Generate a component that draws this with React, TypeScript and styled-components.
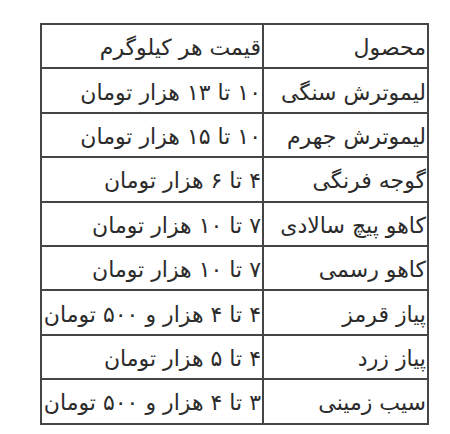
import React from 'react';
import styled, { createGlobalStyle } from 'styled-components';

const rows: [string, string][] = [
  ['محصول', 'قیمت هر کیلوگرم'],
  ['لیموترش سنگی', '۱۰ تا ۱۳ هزار تومان'],
  ['لیموترش جهرم', '۱۰ تا ۱۵ هزار تومان'],
  ['گوجه فرنگی', '۴ تا ۶ هزار تومان'],
  ['کاهو پیچ سالادی', '۷ تا ۱۰ هزار تومان'],
  ['کاهو رسمی', '۷ تا ۱۰ هزار تومان'],
  ['پیاز قرمز', '۴ تا ۴ هزار و ۵۰۰ تومان'],
  ['پیاز زرد', '۴ تا ۵ هزار تومان'],
  ['سیب زمینی', '۳ تا ۴ هزار و ۵۰۰ تومان'],
];

const GlobalStyle = createGlobalStyle`
  body {
    margin: 0;
    background: #fff;
    font-family: "DejaVu Sans", "Noto Sans", sans-serif;
  }
`;

const Page = styled.div`
  padding: 23px 0 0 40px;
`;

const Table = styled.table`
  direction: rtl;
  border-collapse: collapse;
  border: 2px solid #454545;
  color: #2b2b2b;
  font-size: 22px;
  table-layout: fixed;
  width: 387px;
`;

const Cell = styled.td<{ $wide?: boolean }>`
  width: ${(p) => (p.$wide ? '222px' : '165px')};
  height: 44.4px;
  padding: 3px 1px 0 0;
  box-sizing: border-box;
  border: 2px solid #454545;
  text-align: right;
  white-space: nowrap;
  overflow: hidden;
`;

export default function App() {
  return (
    <>
      <GlobalStyle />
      <Page>
        <Table>
          <tbody>
            {rows.map(([name, price]) => (
              <tr key={name}>
                <Cell>{name}</Cell>
                <Cell $wide>{price}</Cell>
              </tr>
            ))}
          </tbody>
        </Table>
      </Page>
    </>
  );
}
